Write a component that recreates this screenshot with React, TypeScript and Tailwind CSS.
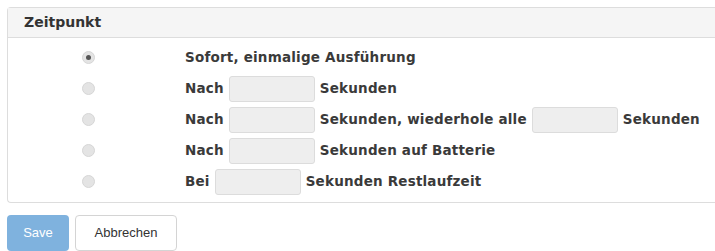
import React from 'react'

const FONT = { fontFamily: "'DejaVu Sans', 'Liberation Sans', sans-serif" }

function Radio({ checked }: { checked?: boolean }) {
  return (
    <span className="w-[13px] h-[13px] rounded-full bg-[#e4e4e4] border border-[#d6d6d6] flex items-center justify-center">
      {checked && <span className="w-[5px] h-[5px] rounded-full bg-[#555]" />}
    </span>
  )
}

function Field() {
  return <span className="inline-block w-[86px] h-[26px] rounded-[3px] bg-[#eeeeee] border border-[#dcdcdc]" />
}

function Row({ checked, children }: { checked?: boolean; children: React.ReactNode }) {
  return (
    <div className="flex items-center h-[31px]">
      <div className="w-[177px] flex">
        <span className="ml-[74px]">
          <Radio checked={checked} />
        </span>
      </div>
      <div className="flex items-center gap-[5px] tracking-[0.2px]">{children}</div>
    </div>
  )
}

export default function App() {
  return (
    <div className="bg-white w-[715px] h-[251px] pt-[7px] pl-[7px] text-[#3a3a3a] font-bold text-[13.5px]" style={FONT}>
      <div className="border border-[#dddddd] rounded-l-[4px] border-r-0">
        <div className="h-[30px] bg-[#f5f5f5] border-b border-[#dddddd] flex items-center pl-[16px] text-[14px] text-[#333]">
          Zeitpunkt
        </div>
        <div className="pt-[4px] pb-[5px]">
          <Row checked>
            <span>Sofort, einmalige Ausführung</span>
          </Row>
          <Row>
            <span>Nach</span>
            <Field />
            <span>Sekunden</span>
          </Row>
          <Row>
            <span>Nach</span>
            <Field />
            <span>Sekunden, wiederhole alle</span>
            <Field />
            <span>Sekunden</span>
          </Row>
          <Row>
            <span>Nach</span>
            <Field />
            <span>Sekunden auf Batterie</span>
          </Row>
          <Row>
            <span>Bei</span>
            <Field />
            <span>Sekunden Restlaufzeit</span>
          </Row>
        </div>
      </div>
      <div className="flex gap-[6px] mt-[12px] font-normal" style={{ fontFamily: "'Liberation Sans', sans-serif" }}>
        <button className="w-[62px] h-[36px] rounded-[4px] bg-[#7fb2de] text-white text-[13px]">Save</button>
        <button className="w-[102px] h-[36px] rounded-[4px] bg-white border border-[#d4d4d4] text-[#333] text-[13px]">
          Abbrechen
        </button>
      </div>
    </div>
  )
}
